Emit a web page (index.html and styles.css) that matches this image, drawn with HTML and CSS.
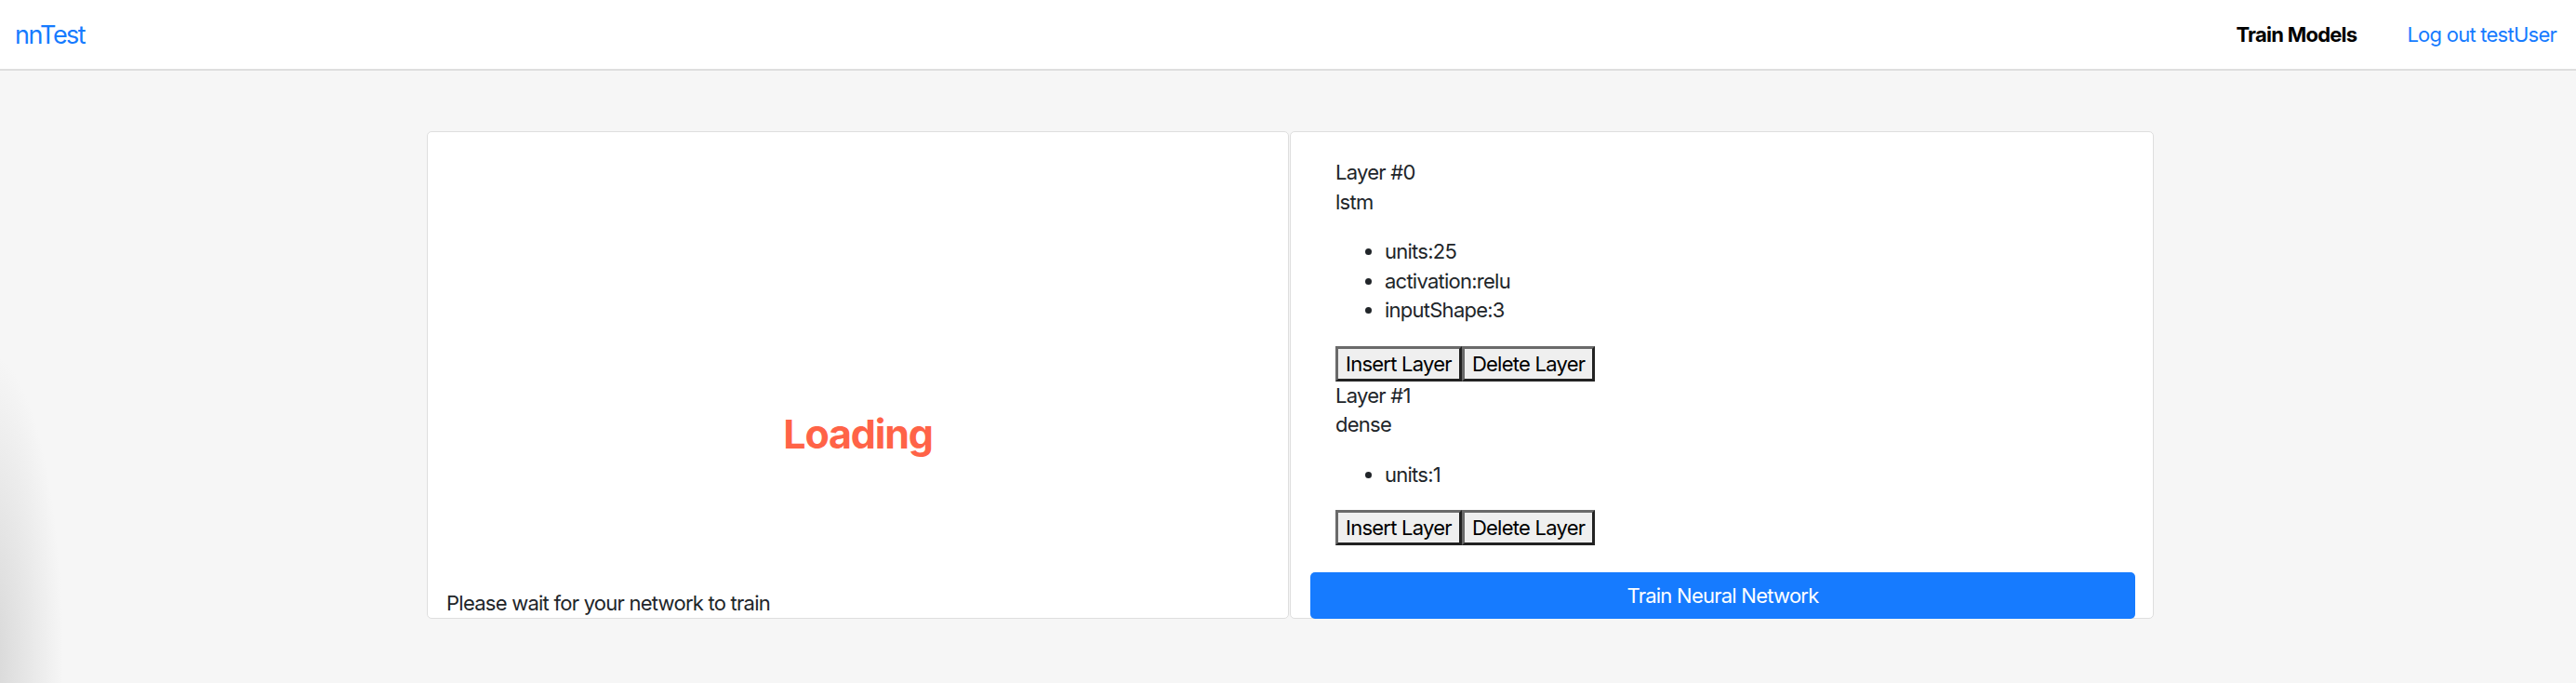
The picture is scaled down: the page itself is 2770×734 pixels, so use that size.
FILE: index.html
```html
<!DOCTYPE html>
<html lang="en">
<head>
<meta charset="utf-8">
<title>nnTest</title>
<link rel="stylesheet" href="styles.css">
</head>
<body>
<nav class="navbar">
  <a class="brand" href="#">nnTest</a>
  <div class="nav-right">
    <span class="nav-active">Train Models</span>
    <a class="nav-link" href="#">Log out testUser</a>
  </div>
</nav>
<main class="container">
  <section class="card card-left">
    <div class="loading-area">
      <h2 class="loading">Loading</h2>
    </div>
    <p class="wait">Please wait for your network to train</p>
  </section>
  <section class="card card-right">
    <div class="layers">
      <div class="layer">
        <div class="line">Layer #0</div>
        <div class="line">lstm</div>
        <ul class="params">
          <li>units:25</li>
          <li>activation:relu</li>
          <li>inputShape:3</li>
        </ul>
        <div class="btns"><button class="btn">Insert Layer</button><button class="btn">Delete Layer</button></div>
      </div>
      <div class="layer">
        <div class="line">Layer #1</div>
        <div class="line">dense</div>
        <ul class="params">
          <li>units:1</li>
        </ul>
        <div class="btns"><button class="btn">Insert Layer</button><button class="btn">Delete Layer</button></div>
      </div>
    </div>
    <button class="train">Train Neural Network</button>
  </section>
</main>
</body>
</html>
```

FILE: styles.css
```css
* { box-sizing: border-box; }
html, body { margin: 0; padding: 0; }
body {
  width: 2770px;
  height: 734px;
  overflow: hidden;
  font-family: Inter, "Noto Sans", sans-serif;
  font-size: 22px;
  letter-spacing: -0.75px;
  color: #212529;
  background:
    radial-gradient(ellipse 80px 330px at -12px 710px, #d6d6d6 0%, rgba(246,246,246,0) 100%),
    #f6f6f6;
}
.navbar {
  height: 76px;
  background: #fff;
  border-bottom: 2px solid #dedede;
  display: flex;
  align-items: center;
  justify-content: space-between;
  padding: 0 21px 0 16px;
}
.brand {
  font-size: 27px;
  letter-spacing: -1.5px;
  color: #167bff;
  text-decoration: none;
}
.nav-right {
  display: flex;
  align-items: center;
  gap: 54px;
}
.nav-active {
  font-weight: 700;
  color: #000;
}
.nav-link {
  color: #167bff;
  text-decoration: none;
}
.container {
  width: 1857px;
  margin: 65px 0 0 459px;
  display: grid;
  grid-template-columns: 928px 929px;
}
.card {
  background: #fff;
  border: 1px solid #dedede;
  border-radius: 5px;
}
.card-left {
  display: flex;
  flex-direction: column;
  margin-right: 1px;
}
.loading-area {
  flex: 1;
  display: flex;
  align-items: center;
  justify-content: center;
  padding-top: 158px;
}
.loading {
  margin: 0;
  font-size: 43px;
  font-weight: 700;
  letter-spacing: -1.2px;
  color: tomato;
  line-height: normal;
}
.wait {
  margin: 0;
  padding-left: 20px;
  line-height: 31.5px;
}
.card-right {
  display: flex;
  flex-direction: column;
  padding: 28px 19px 0 21px;
}
.layers {
  padding-left: 27px;
}
.line {
  line-height: 31.5px;
}
.params {
  margin: 22px 0;
  padding-left: 53px;
  line-height: 31.5px;
}
.btns {
  display: flex;
}
.btn {
  font-family: Inter, "Noto Sans", sans-serif;
  font-size: 22px;
  letter-spacing: -0.75px;
  color: #000;
  background: #efefef;
  border-width: 3px;
  border-style: solid;
  border-color: #6a6a6a #222 #222 #6a6a6a;
  padding: 3px 8px;
  line-height: normal;
  margin: 0;
}
.train {
  margin-top: 29px;
  height: 50px;
  border: none;
  border-radius: 5px;
  background: #167bff;
  color: #fff;
  font-family: Inter, "Noto Sans", sans-serif;
  font-size: 22px;
  letter-spacing: -0.75px;
  margin-bottom: -1px;
}
```
